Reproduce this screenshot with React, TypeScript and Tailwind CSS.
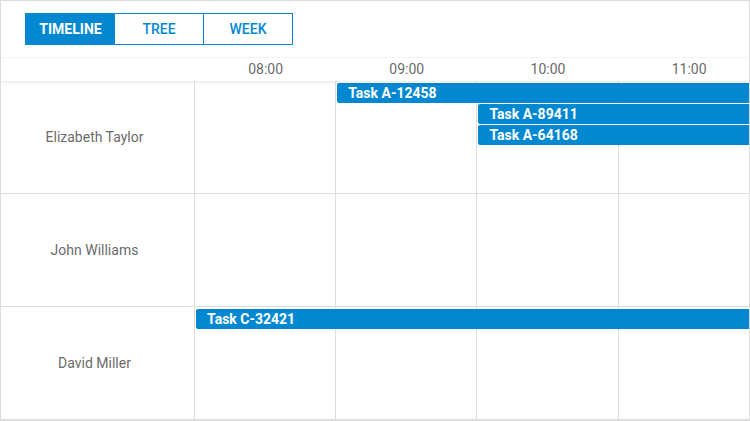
import React from 'react'

const hours = ['08:00', '09:00', '10:00', '11:00']

type Task = { label: string; start: number; lane: number }

const rows: { name: string; tasks: Task[] }[] = [
  {
    name: 'Elizabeth Taylor',
    tasks: [
      { label: 'Task A-12458', start: 1, lane: 0 },
      { label: 'Task A-89411', start: 2, lane: 1 },
      { label: 'Task A-64168', start: 2, lane: 2 },
    ],
  },
  { name: 'John Williams', tasks: [] },
  { name: 'David Miller', tasks: [{ label: 'Task C-32421', start: 0, lane: 0 }] },
]

const COL = 141.2

export default function App() {
  return (
    <div
      className="w-[750px] h-[421px] bg-white border border-[#dcdcdc] overflow-hidden flex flex-col"
      style={{ fontFamily: 'Roboto, "Liberation Sans", sans-serif' }}
    >
      <div className="h-[56px] shrink-0 px-[24px] pt-[12px]">
        <div className="flex h-[32px] w-[268px] border border-[#0288d1]">
          <button className="w-[89px] bg-[#0288d1] text-white text-[14px] font-bold">TIMELINE</button>
          <button className="w-[89px] border-r border-[#0288d1] text-[#0288d1] text-[14px] font-medium">TREE</button>
          <button className="flex-1 text-[#0288d1] text-[14px] font-medium">WEEK</button>
        </div>
      </div>

      <div className="relative z-10 flex h-[24px] shrink-0 border-t border-[#f4f4f4] bg-white shadow-[0_2px_3px_rgba(0,0,0,0.08)]">
        <div className="w-[194px] shrink-0" />
        {hours.map((h) => (
          <div key={h} className="w-[141.2px] shrink-0 text-center text-[14px] leading-[22px] text-[#6b6b6b]">
            {h}
          </div>
        ))}
      </div>

      <div className="flex flex-col">
        {rows.map((row) => (
          <div key={row.name} className="relative flex h-[113px] border-b border-[#dedede]">
            <div className="w-[194px] shrink-0 border-r border-[#dedede] flex items-center justify-center pr-[6px] text-[14px] text-[#6b6b6b]">
              {row.name}
            </div>
            {hours.map((h) => (
              <div key={h} className="w-[141.2px] shrink-0 border-r border-[#dedede]" />
            ))}
            {row.tasks.map((t) => (
              <div
                key={t.label}
                className="absolute right-[-4px] h-[20px] rounded-[2px] bg-[#0288d1] pl-[11px] text-[14px] font-bold leading-[20px] text-white"
                style={{ left: 195 + t.start * COL, top: 2 + t.lane * 21 }}
              >
                {t.label}
              </div>
            ))}
          </div>
        ))}
      </div>
    </div>
  )
}
